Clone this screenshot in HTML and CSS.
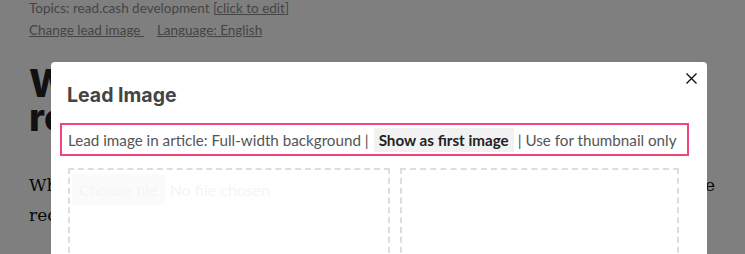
FILE: index.html
```html
<!DOCTYPE html>
<html lang="en">
<head>
    <meta charset="UTF-8">
    <title>Lead Image</title>
    <link rel="stylesheet" href="styles.css">
</head>
<body>
    <div class="article">
        <div class="meta">Topics: read.cash development [<a href="#">click to edit</a>]</div>
        <div class="meta links">
            <a href="#">Change lead image&nbsp;</a>
            <a href="#">Language: English</a>
        </div>
        <h1>What's new on<br>read.cash</h1>
        <p>
            <span class="line">What's new on read.cash: you can choose where the lead image</span>
            <span class="line">recently added to your article goes.</span>
        </p>
    </div>

    <div class="overlay">
        <div class="modal">
            <button class="close" aria-label="Close">
                <svg width="11" height="11" viewBox="0 0 11 11"><path d="M0.5 0.5 L10.5 10.5 M10.5 0.5 L0.5 10.5" stroke="#111" stroke-width="1.4"/></svg>
            </button>
            <h2>Lead Image</h2>
            <div class="mode-picker">
                Lead image in article: Full-width background |
                <span class="mode active">Show as first image</span>
                | Use for thumbnail only
            </div>
            <div class="drop-row">
                <div class="drop drop-main">
                    <div class="file-input">
                        <span class="file-button">Choose file</span>
                        <span class="file-name">No file chosen</span>
                    </div>
                </div>
                <div class="drop drop-preview"></div>
            </div>
        </div>
    </div>
</body>
</html>
```

FILE: styles.css
```css
/* Page under the dialog */
body {
    margin: 0;
    background-color: #fff;
    color: #222;
    font-family: Lato, 'Open Sans', sans-serif;
    overflow: hidden;
    height: 254px;
}

.article {
    padding: 0 29px;
    margin-top: -3px;
}

.meta {
    font-size: 13.5px;
    color: #8a8a8a;
    line-height: 22px;
}

.meta a {
    color: #8a8a8a;
}

.links {
    display: flex;
    gap: 13px;
}

h1 {
    font-family: Inter, 'DejaVu Sans', sans-serif;
    font-weight: 800;
    font-size: 38px;
    line-height: 34px;
    margin: 25px 0 0;
    white-space: nowrap;
}

p {
    font-family: 'DejaVu Serif', serif;
    font-size: 17px;
    line-height: 30px;
    margin: 36px 0 0;
    color: #111;
    width: 686px;
}

p .line {
    display: block;
    white-space: nowrap;
}

p .line:first-child {
    text-align: justify;
    text-align-last: justify;
}

/* Dialog */
.overlay {
    position: fixed;
    inset: 0;
    background-color: rgba(0, 0, 0, 0.5);
    padding: 62px 0 0 51px;
}

.modal {
    position: relative;
    width: 656px;
    height: 260px;
    background-color: #fff;
    border-radius: 4px;
    padding: 21px 18px 0 9px;
    box-sizing: border-box;
}

.close {
    position: absolute;
    top: 10px;
    right: 10px;
    background: none;
    border: none;
    padding: 0;
    cursor: pointer;
}

.modal h2 {
    font-family: Inter, 'DejaVu Sans', sans-serif;
    font-weight: 700;
    font-size: 19.5px;
    color: #444;
    margin: 0 0 16px 7px;
    line-height: 24px;
}

.mode-picker {
    border: 2px solid #f0457d;
    height: 33px;
    box-sizing: border-box;
    padding: 2px 6px;
    display: flex;
    align-items: center;
    gap: 4px;
    font-size: 15.2px;
    color: #555;
    white-space: nowrap;
}

.mode.active {
    background-color: #f2f2f2;
    color: #222;
    font-weight: 700;
    padding: 3px 5px;
    margin-left: 1px;
}

.drop-row {
    display: flex;
    gap: 10px;
    padding-left: 8px;
    margin-top: 12px;
}

.drop {
    border: 2px dashed #ddd;
    height: 120px;
}

.drop-main {
    width: 318px;
}

.drop-preview {
    width: 275px;
}

.file-input {
    display: flex;
    align-items: center;
    gap: 5px;
    margin: 4px 0 0 2px;
    color: #f5f5f5;
    font-size: 16px;
}

.file-button {
    background-color: #fbfbfb;
    padding: 6px 7px;
}
```
